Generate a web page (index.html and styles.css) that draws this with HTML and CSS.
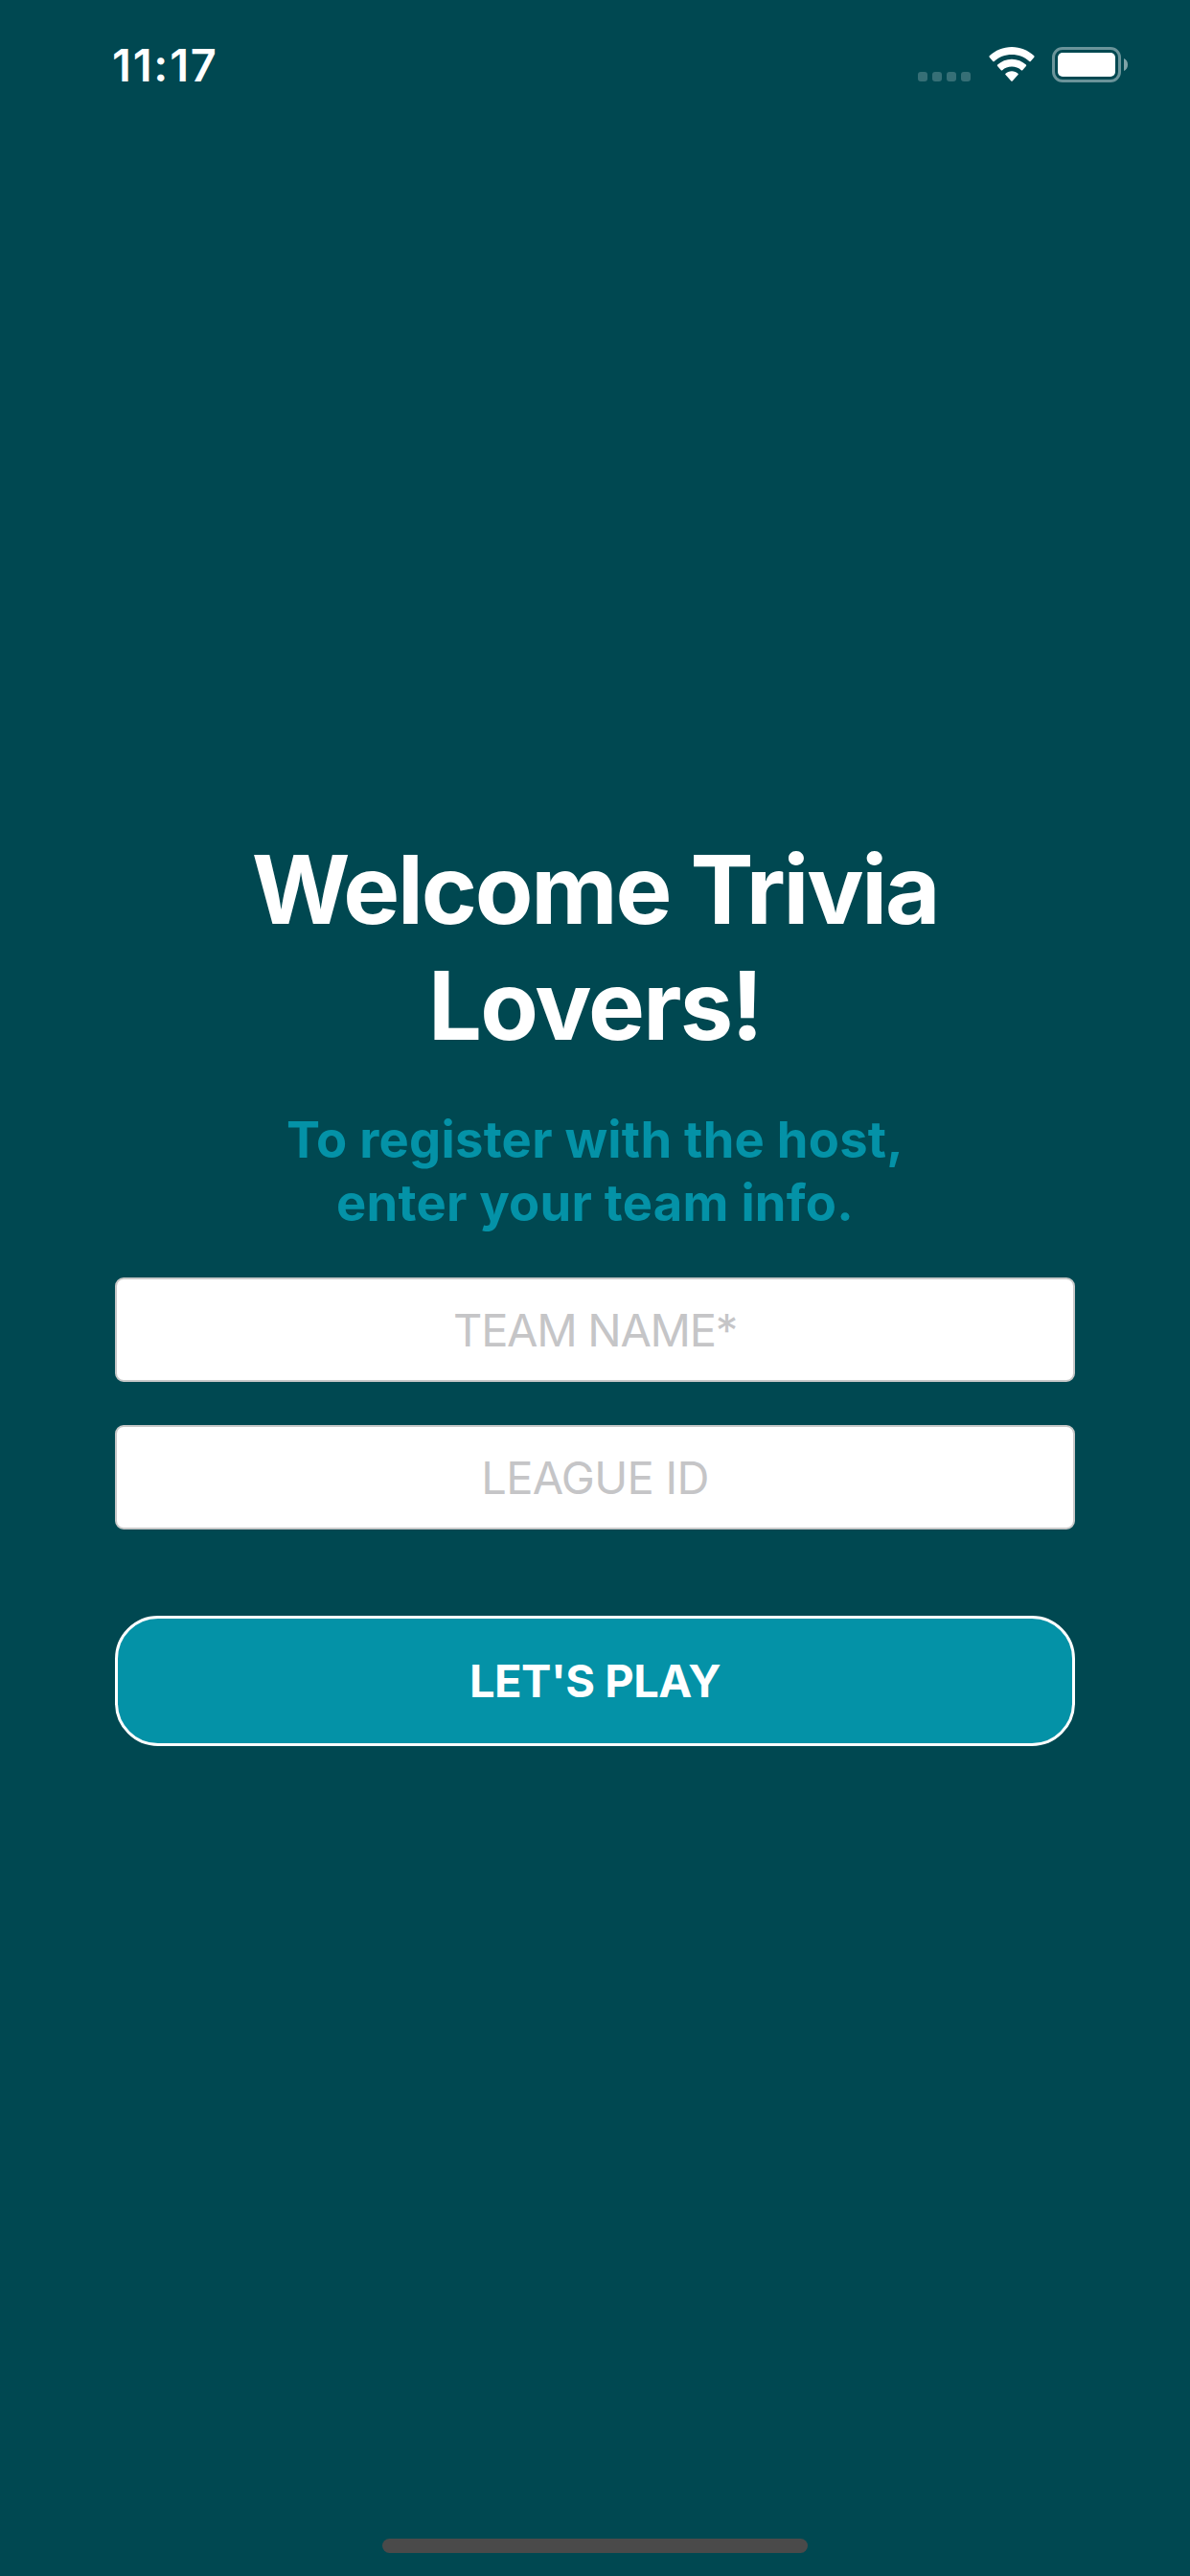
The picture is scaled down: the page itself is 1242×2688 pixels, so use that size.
FILE: index.html
```html
<!DOCTYPE html>
<html lang="en">
<head>
<meta charset="utf-8">
<title>Welcome Trivia Lovers!</title>
<link rel="stylesheet" href="styles.css">
</head>
<body>
<div class="screen">
  <header class="status-bar">
    <span class="clock">11:17</span>
    <div class="status-icons">
      <div class="signal"><i></i><i></i><i></i><i></i></div>
      <svg class="wifi" width="48" height="37" viewBox="0 0 48 37" fill="#fff" aria-hidden="true">
        <path d="M24 0C33 0 41.2 3.500 47.300 9.300Q48 10 47.300 10.700L43.700 14.900Q43 15.600 42.300 14.900C37.500 10.300 31.100 7.900 24 7.900S10.500 10.300 5.700 14.900Q5 15.600 4.300 14.900L.7 10.700Q0 10 .7 9.300C6.800 3.500 15 0 24 0Z"/>
        <path d="M24 12.800C29.700 12.800 34.900 15 38.900 18.600Q39.600 19.300 38.900 20L35.200 24.200Q34.500 24.900 33.800 24.200C31.200 21.800 27.800 20.500 24 20.500S16.800 21.800 14.200 24.200Q13.500 24.900 12.800 24.200L9.100 20Q8.400 19.300 9.100 18.600C13.100 15 18.300 12.800 24 12.800Z"/>
        <path d="M24 25.300C26.600 25.300 28.800 26.200 30.500 27.700Q31.200 28.400 30.500 29.100L24.700 35.500Q24 36.200 23.300 35.500L17.500 29.100Q16.800 28.400 17.500 27.700C19.200 26.200 21.400 25.300 24 25.300Z"/>
      </svg>
      <svg class="battery" width="80" height="37" viewBox="0 0 80 37" aria-hidden="true">
        <rect x="1.500" y="1.500" width="69" height="34" rx="9.500" fill="none" stroke="#fff" stroke-opacity=".42" stroke-width="3"/>
        <rect x="6" y="6" width="60" height="25" rx="5" fill="#fff"/>
        <path d="M75 12C77.500 13 79 15.500 79 18.500S77.500 24 75 25Z" fill="#fff" fill-opacity=".5"/>
      </svg>
    </div>
  </header>
  <main class="register">
    <h1 class="title">Welcome Trivia<br><span class="title-end">Lovers!</span></h1>
    <p class="subtitle">To register with the host,<br>enter your team info.</p>
    <form class="form">
      <input class="field field-team" type="text" placeholder="TEAM NAME*" aria-label="Team name">
      <input class="field field-league" type="text" placeholder="LEAGUE ID" aria-label="League ID">
      <button class="play" type="button">LET'S PLAY</button>
    </form>
  </main>
  <footer class="home-area"><div class="home-indicator"></div></footer>
</div>
</body>
</html>
```
FILE: styles.css
```css
* { box-sizing: border-box; }

body {
  margin: 0;
  background: #004851;
  font-family: Inter, "Liberation Sans", sans-serif;
  color: #fff;
}

.screen {
  display: flex;
  flex-direction: column;
  width: 1242px;
  height: 2688px;
  overflow: hidden;
}

.status-bar {
  display: flex;
  justify-content: space-between;
  align-items: flex-start;
  height: 132px;
  padding: 38px 64px 0 117px;
}

.clock {
  font-size: 47px;
  line-height: 60px;
  font-weight: 600;
  letter-spacing: 1.8px;
}

.status-icons {
  display: flex;
  align-items: flex-start;
  padding-top: 11px;
}

.signal {
  display: flex;
  gap: 5px;
  margin: 26px 19px 0 0;
}

.signal i {
  width: 10px;
  height: 10px;
  border-radius: 3px;
  background: #366f76;
}

.wifi { margin-right: 18px; }

.register {
  flex: 1;
  padding: 736px 120px 0;
  text-align: center;
}

.title {
  margin: 0;
  font-size: 99px;
  line-height: 121px;
  font-weight: 700;
  letter-spacing: -2.2px;
}

.title-end { letter-spacing: -1.8px; }

.subtitle {
  margin: 46px 0 0;
  color: #0492a7;
  font-size: 52.5px;
  line-height: 66px;
  font-weight: 700;
  letter-spacing: 0.25px;
}

.form {
  display: flex;
  flex-direction: column;
  margin-top: 45px;
}

.field {
  width: 100%;
  height: 109px;
  margin: 0 0 45px;
  padding: 0;
  border: 2px solid #c8c8c8;
  border-radius: 9px;
  background: #fff;
  color: #222;
  font: 400 47px/60px Inter, "Liberation Sans", sans-serif;
  text-align: center;
}

.field-team { letter-spacing: -1.3px; }
.field-league { letter-spacing: -0.7px; }

.field::placeholder { color: #c5c5c7; opacity: 1; }

.play {
  height: 136px;
  margin-top: 45px;
  padding: 0;
  border: 3px solid #fff;
  border-radius: 45px;
  background: #0492a7;
  color: #fff;
  font: 700 47px/60px Inter, "Liberation Sans", sans-serif;
  letter-spacing: -0.5px;
}

.home-area {
  display: flex;
  justify-content: center;
  padding-bottom: 24px;
}

.home-indicator {
  width: 444px;
  height: 15px;
  border-radius: 8px;
  background: #4a4a4a;
}
```
